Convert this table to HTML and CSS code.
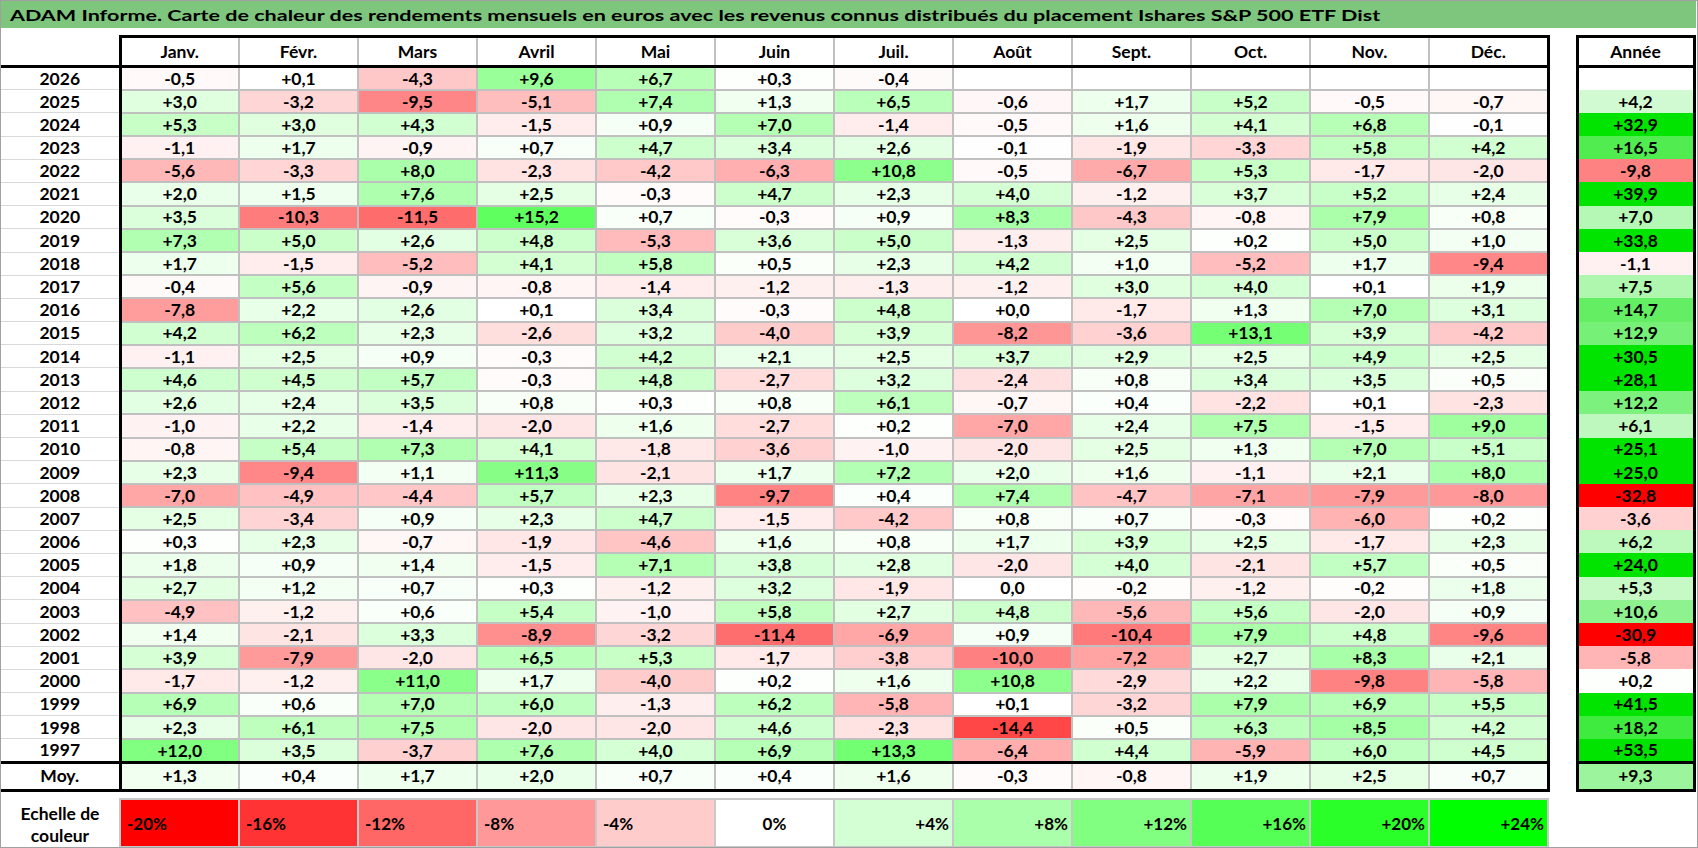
FILE: index.html
```html
<!DOCTYPE html>
<html lang="fr">
<head>
<meta charset="utf-8">
<title>ADAM Informe - Carte de chaleur</title>
<link rel="stylesheet" href="styles.css">
</head>
<body>
<div class="page">
  <div class="title"><span class="title-text">ADAM Informe. Carte de chaleur des rendements mensuels en euros avec les revenus connus distribués du placement Ishares S&amp;P 500 ETF Dist</span></div>
  <table class="heat">
    <colgroup>
      <col class="c-label">
      <col class="c-m"><col class="c-m"><col class="c-m"><col class="c-m"><col class="c-m"><col class="c-m">
      <col class="c-m"><col class="c-m"><col class="c-m"><col class="c-m"><col class="c-m"><col class="c-m">
      <col class="c-gap">
      <col class="c-year">
    </colgroup>
    <thead>
      <tr class="hdr">
        <th class="lbl"></th>
        <th class="m first">Janv.</th>
        <th class="m">Févr.</th>
        <th class="m">Mars</th>
        <th class="m">Avril</th>
        <th class="m">Mai</th>
        <th class="m">Juin</th>
        <th class="m">Juil.</th>
        <th class="m">Août</th>
        <th class="m">Sept.</th>
        <th class="m">Oct.</th>
        <th class="m">Nov.</th>
        <th class="m last">Déc.</th>
        <th class="gap"></th>
        <th class="yr">Année</th>
      </tr>
    </thead>
    <tbody id="rows"></tbody>
    <tfoot>
      <tr class="spacer"><td colspan="15"></td></tr>
      <tr class="scale">
        <td class="lbl-s">Echelle de<br>couleur</td>
        <td class="s neg s1">-20%</td>
        <td class="s neg s2">-16%</td>
        <td class="s neg s3">-12%</td>
        <td class="s neg s4">-8%</td>
        <td class="s neg s5">-4%</td>
        <td class="s zero s6">0%</td>
        <td class="s pos s7">+4%</td>
        <td class="s pos s8">+8%</td>
        <td class="s pos s9">+12%</td>
        <td class="s pos s10">+16%</td>
        <td class="s pos s11">+20%</td>
        <td class="s pos s12">+24%</td>
        <td class="gap"></td>
        <td class="gap"></td>
      </tr>
    </tfoot>
  </table>
</div>
<script src="script.js"></script>
</body>
</html>
```

FILE: styles.css
```css
html, body {
  margin: 0;
  padding: 0;
  background: #ffffff;
}

.page {
  width: 1698px;
  height: 848px;
  box-sizing: border-box;
  border: 1px solid #a0a0a0;
  overflow: hidden;
  background: #ffffff;
  font-family: "Lato", "Open Sans", "DejaVu Sans", sans-serif;
  color: #000;
}

.title {
  height: 27px;
  box-sizing: border-box;
  padding-top: 2px;
  line-height: 25px;
  margin-right: 1px;
  padding-left: 9px;
  background: #7ec67e;
  font-weight: 700;
  font-size: 15.5px;
  white-space: nowrap;
}

.title-text {
  display: inline-block;
  transform: scaleX(1.39);
  transform-origin: left center;
}

.heat {
  border-collapse: collapse;
  table-layout: fixed;
  width: 1694px;
  margin-top: 7px;
}

.c-label { width: 119px; }
.c-m { width: 119px; }
.c-gap { width: 29px; }
.c-year { width: 117px; }

.heat th,
.heat td {
  padding: 0;
  text-align: center;
  vertical-align: middle;
  font-weight: 700;
  font-size: 17.5px;
  line-height: 1;
  white-space: nowrap;
}

/* header */
.hdr { height: 30px; }
.hdr th.lbl {
  border-bottom: 3px solid #000;
  border-right: 3px solid #000;
}
.hdr th.m {
  border-top: 3px solid #000;
  border-bottom: 3px solid #000;
  border-left: 2px solid #c0c0c0;
  border-right: 2px solid #c0c0c0;
}
.hdr th.first { border-left: 3px solid #000; }
.hdr th.last { border-right: 3px solid #000; }
.hdr th.gap { border: none; }
.hdr th.yr { border: 3px solid #000; }

/* data rows */
.row { height: 23.2px; }
.row td.lbl {
  border-bottom: 1px solid #d9d9d9;
  border-right: 3px solid #000;
}
.row td.v {
  border: 2px solid #c0c0c0;
}
.row td.v.first { border-left: 3px solid #000; }
.row td.v.last { border-right: 3px solid #000; }
.row td.gap { border: none; }
.row td.yr {
  border-left: 3px solid #000;
  border-right: 3px solid #000;
}
.row.end td.lbl,
.row.end td.v,
.row.end td.yr { border-bottom: 3px solid #000; }

.row.moy { height: 28px; }
.row.moy td.lbl,
.row.moy td.v { border-bottom: 3px solid #000; }
.row.moy td.yr { border: 3px solid #000; }

/* spacer + scale */
.spacer { height: 9px; }
.spacer td { border: none; }

.scale { height: 44px; }
.scale td.lbl-s {
  border: none;
  line-height: 22px;
  padding-top: 4px;
  vertical-align: top;
}
.scale td.s {
  border: 2px solid #c8c8c8;
  font-size: 17px;
}
.scale td.gap { border: none; }
.scale td.neg { text-align: left; padding-left: 6px; }
.scale td.zero { text-align: center; }
.scale td.pos { text-align: right; padding-right: 3px; }

.s1 { background: #ff0000; }
.s2 { background: #ff3333; }
.s3 { background: #ff6666; }
.s4 { background: #ff9999; }
.s5 { background: #ffcccc; }
.s6 { background: #ffffff; }
.s7 { background: #d4ffd4; }
.s8 { background: #aaffaa; }
.s9 { background: #80ff80; }
.s10 { background: #55ff55; }
.s11 { background: #2aff2a; }
.s12 { background: #00ff00; }
```

FILE: script.js
```javascript
(function () {
  var data = [
    ["2026", "-0,5", "+0,1", "-4,3", "+9,6", "+6,7", "+0,3", "-0,4", "", "", "", "", "", ""],
    ["2025", "+3,0", "-3,2", "-9,5", "-5,1", "+7,4", "+1,3", "+6,5", "-0,6", "+1,7", "+5,2", "-0,5", "-0,7", "+4,2"],
    ["2024", "+5,3", "+3,0", "+4,3", "-1,5", "+0,9", "+7,0", "-1,4", "-0,5", "+1,6", "+4,1", "+6,8", "-0,1", "+32,9"],
    ["2023", "-1,1", "+1,7", "-0,9", "+0,7", "+4,7", "+3,4", "+2,6", "-0,1", "-1,9", "-3,3", "+5,8", "+4,2", "+16,5"],
    ["2022", "-5,6", "-3,3", "+8,0", "-2,3", "-4,2", "-6,3", "+10,8", "-0,5", "-6,7", "+5,3", "-1,7", "-2,0", "-9,8"],
    ["2021", "+2,0", "+1,5", "+7,6", "+2,5", "-0,3", "+4,7", "+2,3", "+4,0", "-1,2", "+3,7", "+5,2", "+2,4", "+39,9"],
    ["2020", "+3,5", "-10,3", "-11,5", "+15,2", "+0,7", "-0,3", "+0,9", "+8,3", "-4,3", "-0,8", "+7,9", "+0,8", "+7,0"],
    ["2019", "+7,3", "+5,0", "+2,6", "+4,8", "-5,3", "+3,6", "+5,0", "-1,3", "+2,5", "+0,2", "+5,0", "+1,0", "+33,8"],
    ["2018", "+1,7", "-1,5", "-5,2", "+4,1", "+5,8", "+0,5", "+2,3", "+4,2", "+1,0", "-5,2", "+1,7", "-9,4", "-1,1"],
    ["2017", "-0,4", "+5,6", "-0,9", "-0,8", "-1,4", "-1,2", "-1,3", "-1,2", "+3,0", "+4,0", "+0,1", "+1,9", "+7,5"],
    ["2016", "-7,8", "+2,2", "+2,6", "+0,1", "+3,4", "-0,3", "+4,8", "+0,0", "-1,7", "+1,3", "+7,0", "+3,1", "+14,7"],
    ["2015", "+4,2", "+6,2", "+2,3", "-2,6", "+3,2", "-4,0", "+3,9", "-8,2", "-3,6", "+13,1", "+3,9", "-4,2", "+12,9"],
    ["2014", "-1,1", "+2,5", "+0,9", "-0,3", "+4,2", "+2,1", "+2,5", "+3,7", "+2,9", "+2,5", "+4,9", "+2,5", "+30,5"],
    ["2013", "+4,6", "+4,5", "+5,7", "-0,3", "+4,8", "-2,7", "+3,2", "-2,4", "+0,8", "+3,4", "+3,5", "+0,5", "+28,1"],
    ["2012", "+2,6", "+2,4", "+3,5", "+0,8", "+0,3", "+0,8", "+6,1", "-0,7", "+0,4", "-2,2", "+0,1", "-2,3", "+12,2"],
    ["2011", "-1,0", "+2,2", "-1,4", "-2,0", "+1,6", "-2,7", "+0,2", "-7,0", "+2,4", "+7,5", "-1,5", "+9,0", "+6,1"],
    ["2010", "-0,8", "+5,4", "+7,3", "+4,1", "-1,8", "-3,6", "-1,0", "-2,0", "+2,5", "+1,3", "+7,0", "+5,1", "+25,1"],
    ["2009", "+2,3", "-9,4", "+1,1", "+11,3", "-2,1", "+1,7", "+7,2", "+2,0", "+1,6", "-1,1", "+2,1", "+8,0", "+25,0"],
    ["2008", "-7,0", "-4,9", "-4,4", "+5,7", "+2,3", "-9,7", "+0,4", "+7,4", "-4,7", "-7,1", "-7,9", "-8,0", "-32,8"],
    ["2007", "+2,5", "-3,4", "+0,9", "+2,3", "+4,7", "-1,5", "-4,2", "+0,8", "+0,7", "-0,3", "-6,0", "+0,2", "-3,6"],
    ["2006", "+0,3", "+2,3", "-0,7", "-1,9", "-4,6", "+1,6", "+0,8", "+1,7", "+3,9", "+2,5", "-1,7", "+2,3", "+6,2"],
    ["2005", "+1,8", "+0,9", "+1,4", "-1,5", "+7,1", "+3,8", "+2,8", "-2,0", "+4,0", "-2,1", "+5,7", "+0,5", "+24,0"],
    ["2004", "+2,7", "+1,2", "+0,7", "+0,3", "-1,2", "+3,2", "-1,9", "0,0", "-0,2", "-1,2", "-0,2", "+1,8", "+5,3"],
    ["2003", "-4,9", "-1,2", "+0,6", "+5,4", "-1,0", "+5,8", "+2,7", "+4,8", "-5,6", "+5,6", "-2,0", "+0,9", "+10,6"],
    ["2002", "+1,4", "-2,1", "+3,3", "-8,9", "-3,2", "-11,4", "-6,9", "+0,9", "-10,4", "+7,9", "+4,8", "-9,6", "-30,9"],
    ["2001", "+3,9", "-7,9", "-2,0", "+6,5", "+5,3", "-1,7", "-3,8", "-10,0", "-7,2", "+2,7", "+8,3", "+2,1", "-5,8"],
    ["2000", "-1,7", "-1,2", "+11,0", "+1,7", "-4,0", "+0,2", "+1,6", "+10,8", "-2,9", "+2,2", "-9,8", "-5,8", "+0,2"],
    ["1999", "+6,9", "+0,6", "+7,0", "+6,0", "-1,3", "+6,2", "-5,8", "+0,1", "-3,2", "+7,9", "+6,9", "+5,5", "+41,5"],
    ["1998", "+2,3", "+6,1", "+7,5", "-2,0", "-2,0", "+4,6", "-2,3", "-14,4", "+0,5", "+6,3", "+8,5", "+4,2", "+18,2"],
    ["1997", "+12,0", "+3,5", "-3,7", "+7,6", "+4,0", "+6,9", "+13,3", "-6,4", "+4,4", "-5,9", "+6,0", "+4,5", "+53,5"],
    ["Moy.", "+1,3", "+0,4", "+1,7", "+2,0", "+0,7", "+0,4", "+1,6", "-0,3", "-0,8", "+1,9", "+2,5", "+0,7", "+9,3"]
  ];

  function colour(text, annual) {
    if (text === "") return "#ffffff";
    var v = parseFloat(text.replace(",", "."));
    if (isNaN(v) || v === 0) return "#ffffff";
    var r, g, b, t;
    if (v < 0) {
      t = Math.min(1, -v / 20);
      r = 255;
      g = Math.round(255 * (1 - t));
      b = g;
    } else {
      t = Math.min(1, v / 24);
      var endG = annual ? 228 : 255;
      r = Math.round(255 * (1 - t));
      g = Math.round(255 + (endG - 255) * t);
      b = r;
    }
    return "rgb(" + r + "," + g + "," + b + ")";
  }

  var body = document.getElementById("rows");
  var last = data.length - 1;
  data.forEach(function (row, i) {
    var tr = document.createElement("tr");
    tr.className = "row" + (i === last - 1 ? " end" : "") + (i === last ? " moy" : "");
    var lbl = document.createElement("td");
    lbl.className = "lbl";
    lbl.textContent = row[0];
    tr.appendChild(lbl);
    for (var m = 1; m <= 12; m++) {
      var td = document.createElement("td");
      td.className = "v" + (m === 1 ? " first" : "") + (m === 12 ? " last" : "");
      td.textContent = row[m];
      td.style.background = colour(row[m], false);
      tr.appendChild(td);
    }
    var gap = document.createElement("td");
    gap.className = "gap";
    tr.appendChild(gap);
    var yr = document.createElement("td");
    yr.className = "yr";
    yr.textContent = row[13];
    yr.style.background = colour(row[13], true);
    tr.appendChild(yr);
    body.appendChild(tr);
  });
})();
```
